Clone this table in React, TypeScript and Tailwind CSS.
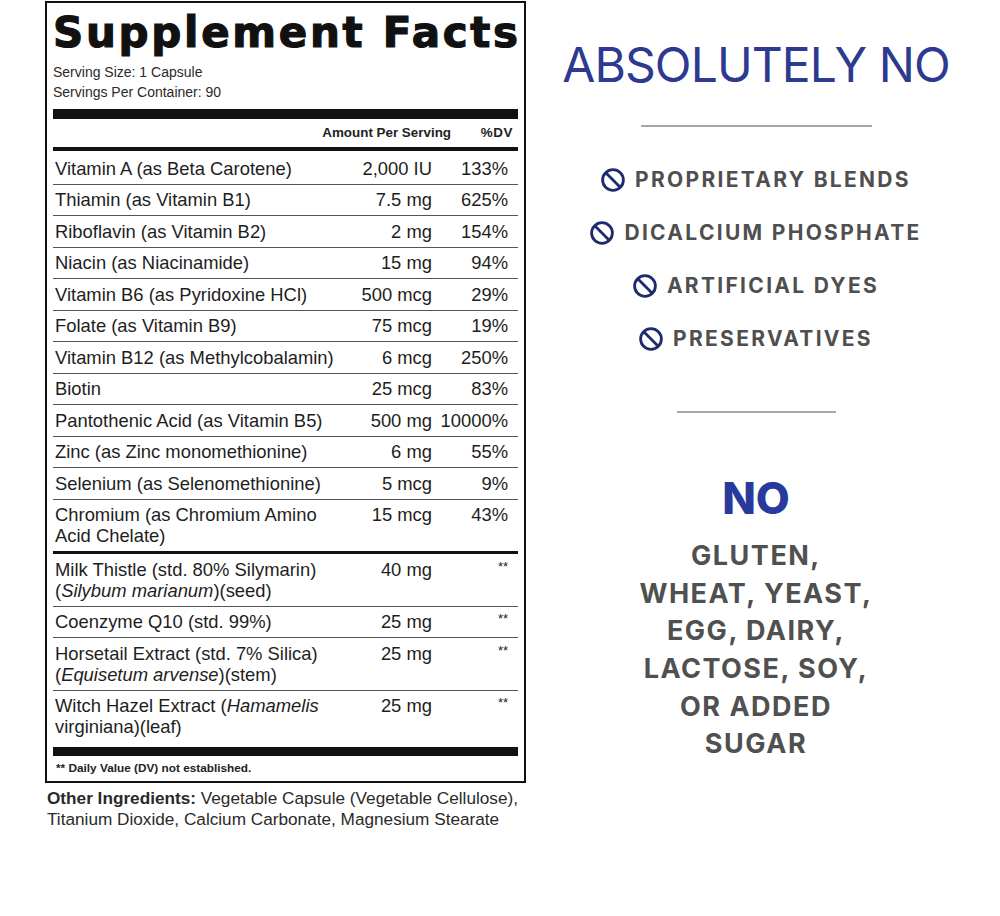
import React from "react";

type Row = {
  name: React.ReactNode;
  amt: string;
  dv: string;
  kind?: "thick" | "none";
};

const rows: Row[] = [
  { name: "Vitamin A (as Beta Carotene)", amt: "2,000 IU", dv: "133%" },
  { name: "Thiamin (as Vitamin B1)", amt: "7.5 mg", dv: "625%" },
  { name: "Riboflavin (as Vitamin B2)", amt: "2 mg", dv: "154%" },
  { name: "Niacin (as Niacinamide)", amt: "15 mg", dv: "94%" },
  { name: "Vitamin B6 (as Pyridoxine HCl)", amt: "500 mcg", dv: "29%" },
  { name: "Folate (as Vitamin B9)", amt: "75 mcg", dv: "19%" },
  { name: "Vitamin B12 (as Methylcobalamin)", amt: "6 mcg", dv: "250%" },
  { name: "Biotin", amt: "25 mcg", dv: "83%" },
  { name: "Pantothenic Acid (as Vitamin B5)", amt: "500 mg", dv: "10000%" },
  { name: "Zinc (as Zinc monomethionine)", amt: "6 mg", dv: "55%" },
  { name: "Selenium (as Selenomethionine)", amt: "5 mcg", dv: "9%" },
  { name: "Chromium (as Chromium Amino Acid Chelate)", amt: "15 mcg", dv: "43%", kind: "thick" },
  {
    name: (
      <>
        Milk Thistle (std. 80% Silymarin) (<i>Silybum marianum</i>)(seed)
      </>
    ),
    amt: "40 mg",
    dv: "**",
  },
  { name: "Coenzyme Q10 (std. 99%)", amt: "25 mg", dv: "**" },
  {
    name: (
      <>
        Horsetail Extract (std. 7% Silica) (<i>Equisetum arvense</i>)(stem)
      </>
    ),
    amt: "25 mg",
    dv: "**",
  },
  {
    name: (
      <>
        Witch Hazel Extract (<i>Hamamelis</i> virginiana)(leaf)
      </>
    ),
    amt: "25 mg",
    dv: "**",
    kind: "none",
  },
];

function NoIcon() {
  return (
    <svg width="24" height="24" viewBox="0 0 24 24" className="shrink-0">
      <circle cx="12" cy="12" r="10.4" fill="none" stroke="#1f2b6c" strokeWidth="2.8" />
      <line x1="4.8" y1="4.8" x2="19.2" y2="19.2" stroke="#1f2b6c" strokeWidth="2.8" />
    </svg>
  );
}

const noItems = ["PROPRIETARY BLENDS", "DICALCIUM PHOSPHATE", "ARTIFICIAL DYES", "PRESERVATIVES"];
const glutenLines = ["GLUTEN,", "WHEAT, YEAST,", "EGG, DAIRY,", "LACTOSE, SOY,", "OR ADDED", "SUGAR"];

export default function App() {
  return (
    <div className="w-[1000px] h-[916px] bg-white flex">
      {/* Left column */}
      <div className="ml-[45px] w-[481px] mt-[1px] font-['Liberation_Sans',Arial,sans-serif] text-[#1e1e1e]">
        <div className="border-2 border-[#111] px-[6px]">
          <div className="pt-[9px] h-[53px] text-[42px] leading-[42px] font-bold tracking-[2.7px] whitespace-nowrap text-[#111] [-webkit-text-stroke:1.2px_#111] font-['DejaVu_Sans',sans-serif]">
            Supplement Facts
          </div>
          <div className="mt-[6px] text-[14px] leading-[20px] text-[#2a2a2a]">
            <div>Serving Size: 1 Capsule</div>
            <div>Servings Per Container: 90</div>
          </div>
          <div className="mt-[7px] h-[10px] bg-[#111]" />
          <div className="h-[28px] flex items-center justify-end pr-[5px] text-[13.4px] font-bold text-[#222]">
            <span>Amount Per Serving</span>
            <span className="ml-[22px] w-[40px] text-right tracking-[0.6px]">%DV</span>
          </div>
          <div className="h-[4px] bg-[#111]" />
          <div className="pt-[2px]">
            {rows.map((r, i) => (
              <div
                key={i}
                className={
                  "grid grid-cols-[297px_82px_86px] py-[4.75px] text-[18.4px] leading-[21px] " +
                  (r.kind === "thick"
                    ? "border-b-[3px] border-[#111]"
                    : r.kind === "none"
                    ? ""
                    : "border-b border-[#555]")
                }
              >
                <div className="pl-[2px]">{r.name}</div>
                <div className="text-right whitespace-nowrap">{r.amt}</div>
                <div className="text-right pr-[10px] whitespace-nowrap">
                  {r.dv === "**" ? <span className="text-[13px] leading-[16px] align-top">**</span> : r.dv}
                </div>
              </div>
            ))}
          </div>
          <div className="mt-[5px] h-[9px] bg-[#111]" />
          <div className="h-[25px] flex items-center pl-[3px] text-[11.8px] font-bold text-[#222]">
            ** Daily Value (DV) not established.
          </div>
        </div>
        <div className="mt-[5px] pl-[2px] text-[17.2px] leading-[21px] text-[#2a2a2a]">
          <span className="font-bold">Other Ingredients:</span> Vegetable Capsule (Vegetable Cellulose), Titanium
          Dioxide, Calcium Carbonate, Magnesium Stearate
        </div>
      </div>

      {/* Right column */}
      <div className="flex-1 pr-[14px] flex flex-col items-center font-['Inter','Open_Sans',sans-serif]">
        <div className="mt-[41px] text-[48px] leading-[48px] font-normal text-[#2d3a8f] whitespace-nowrap tracking-[-0.9px]">
          ABSOLUTELY NO
        </div>
        <div className="mt-[36px] w-[231px] h-[2px] bg-[#a8a8a8]" />
        <div className="mt-[26px] flex flex-col items-center">
          {noItems.map((t) => (
            <div key={t} className="h-[53px] flex items-center gap-[10px]">
              <NoIcon />
              <span className="text-[21px] font-bold tracking-[2.3px] text-[#4f4f4f] whitespace-nowrap">{t}</span>
            </div>
          ))}
        </div>
        <div className="mt-[46px] w-[159px] h-[2px] bg-[#a8a8a8]" />
        <div className="mt-[63px] text-[44px] leading-[44px] font-extrabold text-[#283a9c]">NO</div>
        <div className="mt-[17px] flex flex-col items-center">
          {glutenLines.map((t) => (
            <div
              key={t}
              className="h-[37.7px] leading-[37.7px] text-[27px] font-bold tracking-[1.5px] text-[#505050] whitespace-nowrap"
            >
              {t}
            </div>
          ))}
        </div>
      </div>
    </div>
  );
}
